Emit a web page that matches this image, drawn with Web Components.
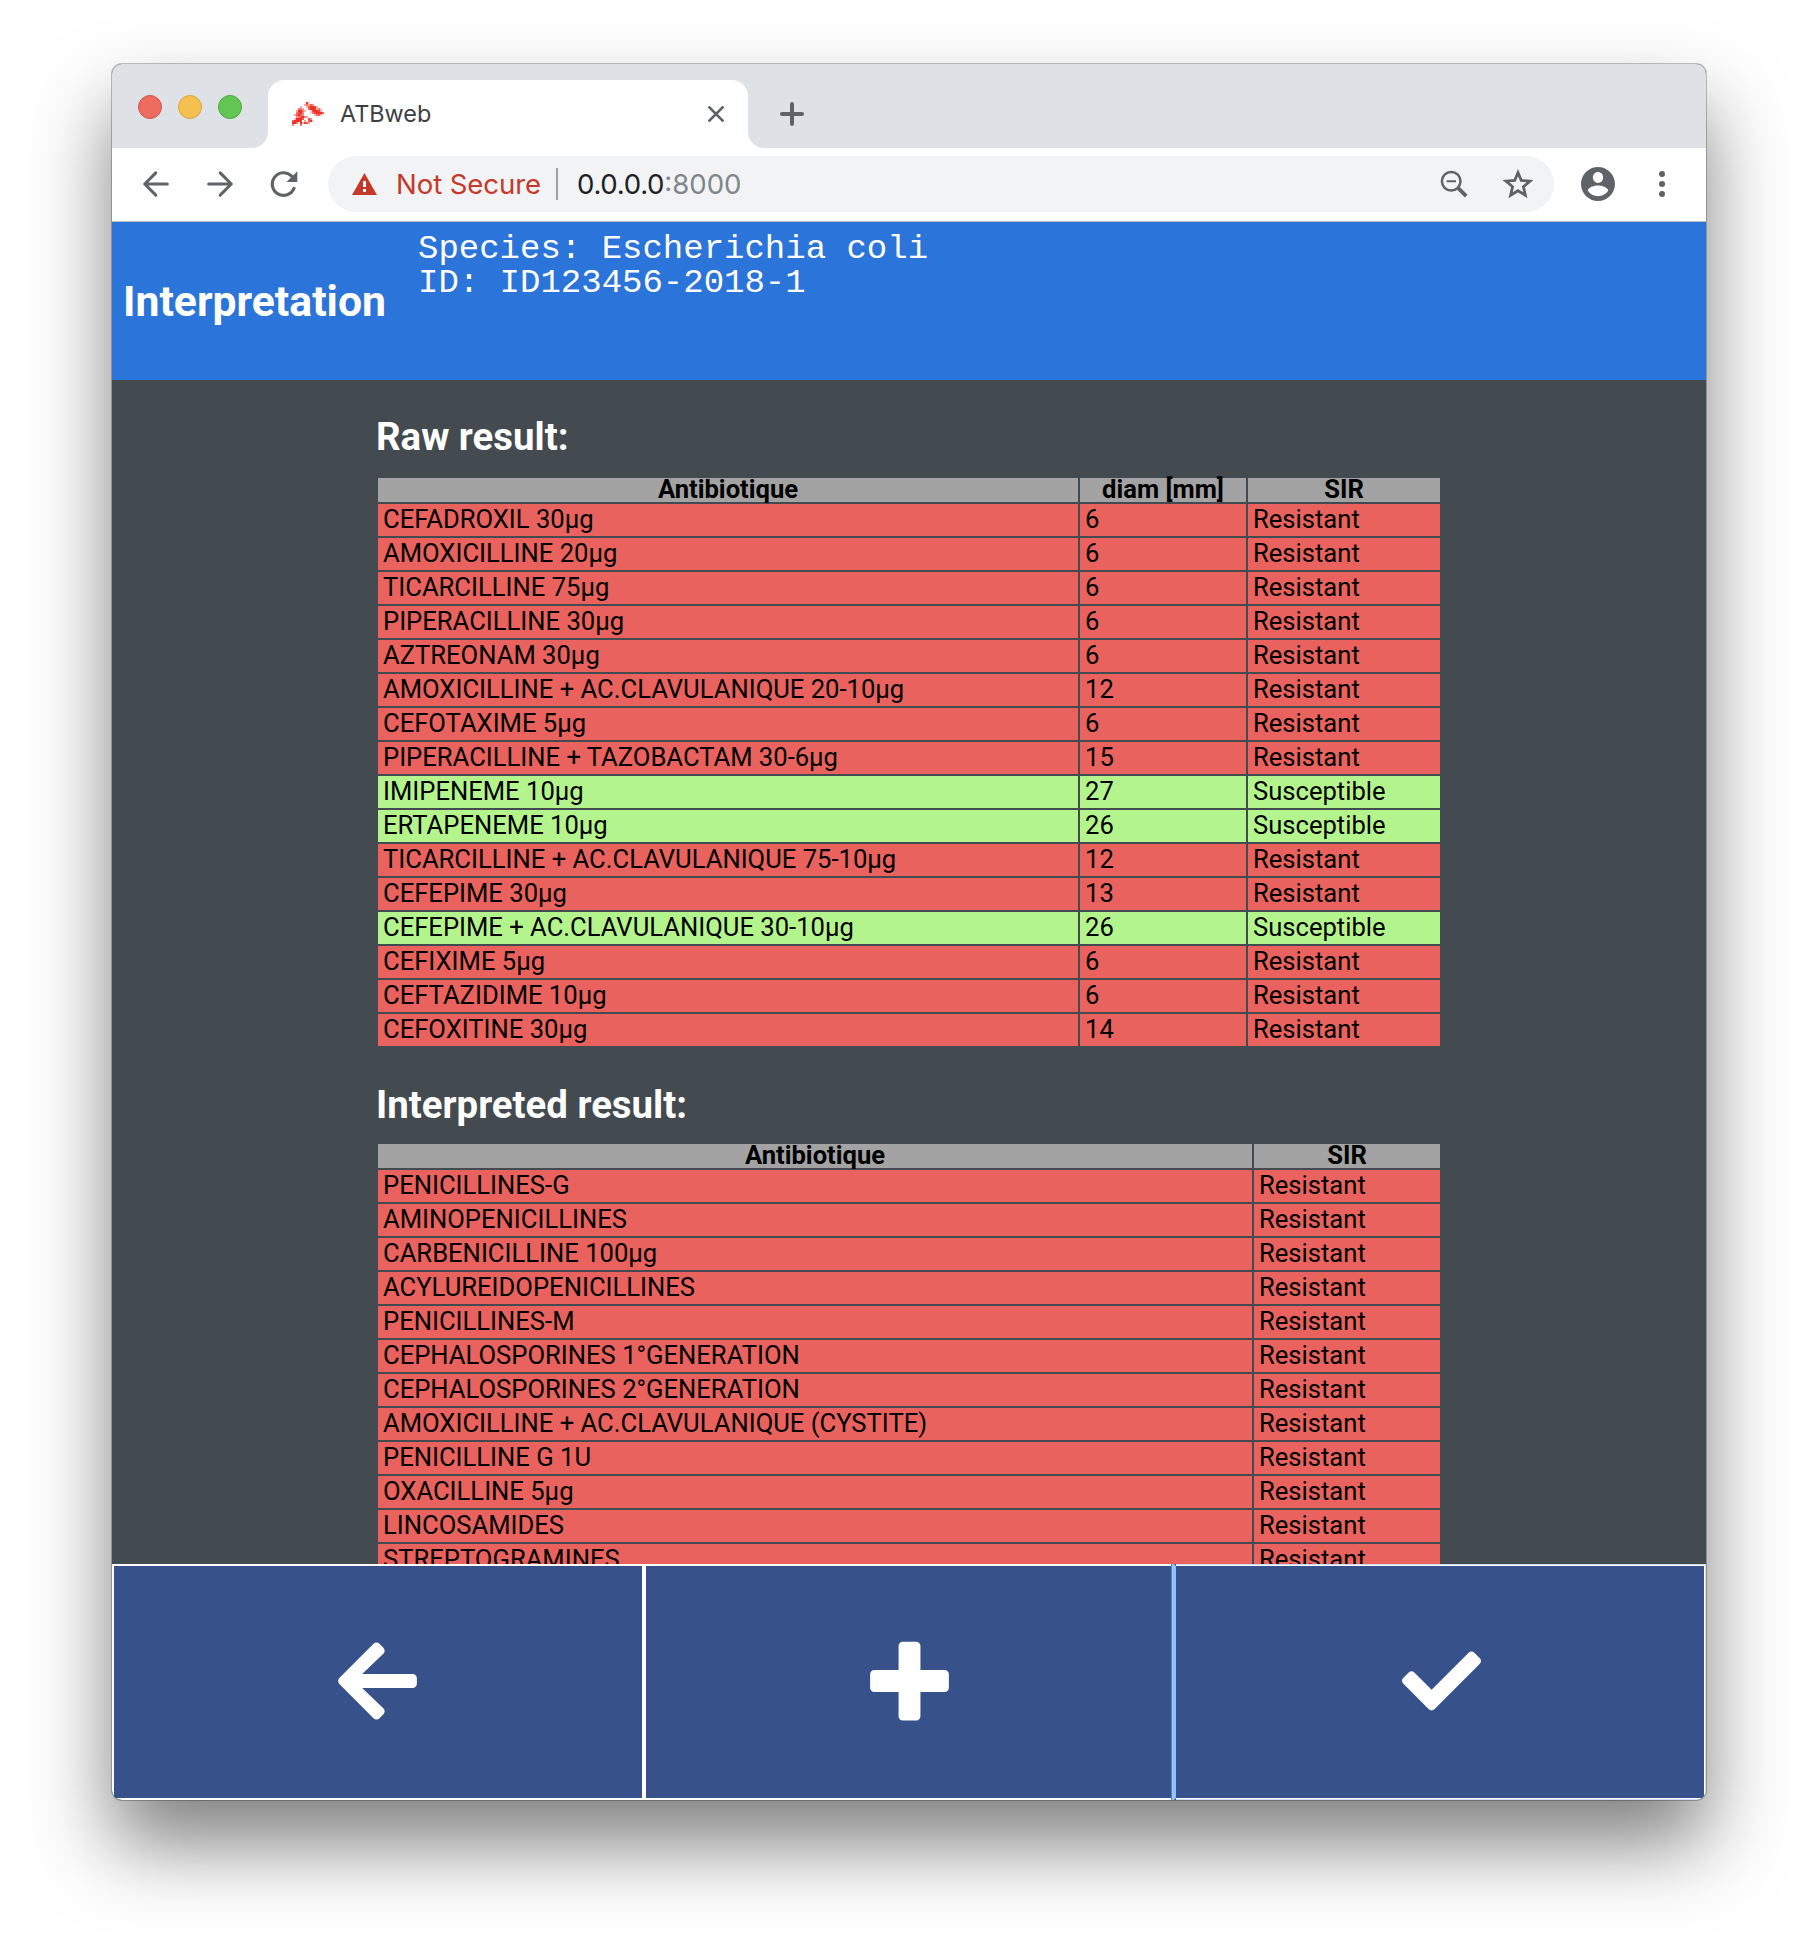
<!DOCTYPE html>
<html lang="en">
<head>
<meta charset="utf-8">
<title>ATBweb</title>
<style>
html,body{margin:0;height:100%;background:#fff}
body{width:1818px;height:1960px;overflow:hidden;font-family:Roboto,"Liberation Sans",sans-serif}
</style>
</head>
<body>
<browser-window>
  <tab-strip slot="chrome">ATBweb</tab-strip>
  <nav-bar slot="chrome" host="0.0.0.0" port=":8000">Not Secure</nav-bar>
  <page-header heading="Interpretation"><div>Species: Escherichia coli</div><div>ID: ID123456-2018-1</div></page-header>
  <result-view></result-view>
  <action-bar>
    <action-button icon="back"></action-button>
    <action-button icon="plus"></action-button>
    <action-button icon="check" active></action-button>
  </action-bar>
</browser-window>

<script>
class BaseElement extends HTMLElement {
  connectedCallback() {
    if (this.shadowRoot) return;
    this.attachShadow({ mode: 'open' }).innerHTML = this.render();
  }
}

customElements.define('browser-window', class extends BaseElement {
  render() {
    return `<style>
      :host{display:block;padding:64px 112px 160px}
      .win{display:flex;flex-direction:column;width:1594px;height:1736px;border-radius:10px;background:#434a50;
        box-shadow:0 0 0 1px rgba(0,0,0,.24),0 44px 80px rgba(0,0,0,.5)}
      .clip{display:flex;flex-direction:column;flex:1;min-height:0;border-radius:10px;overflow:hidden}
      .chrome{display:flex;flex-direction:column}
    </style>
    <div class="win"><div class="clip"><div class="chrome"><slot name="chrome"></slot></div><slot></slot></div></div>`;
  }
});

/* The site icon is a 16×12 bitmap; each digit is the opacity of one cell. */
const SITE_ICON = [
  '0000000920000000',
  '0000004647500000',
  '0000300379984000',
  '0006640079993620',
  '0049963002899840',
  '0068950002689997',
  '0479750000036731',
  '0056896400001000',
  '0399970085000000',
  '7999804079200000',
  '9960938740000000',
  '5000600000000000'];

customElements.define('tab-strip', class extends BaseElement {
  render() {
    const cells = SITE_ICON.map((row, y) => [...row].map((v, x) =>
      v === '0' ? '' : `<rect x="${x * 2}" y="${y * 2}" width="2" height="2" opacity="${v / 9}"/>`).join('')).join('');
    return `<style>
      :host{display:flex;height:84px;background:#dee1e6;box-sizing:border-box;align-items:flex-end}
      .lights{display:flex;gap:16px;padding:0 0 29px 26px;width:114px}
      .lights i{width:24px;height:24px;border-radius:50%;box-sizing:border-box;border:1px solid}
      .r{background:#ee6b60;border-color:#d2554b!important}
      .y{background:#f6c04f;border-color:#dba23b!important}
      .g{background:#62c655;border-color:#4ea73f!important}
      .curve{display:block;width:16px;height:16px;flex:none}
      .tab{display:flex;align-items:center;width:480px;height:68px;background:#fff;border-radius:16px 16px 0 0;box-sizing:border-box;padding:0 24px}
      .name{flex:1;font:23.4px/40px Inter,"Liberation Sans",sans-serif;color:#3c4043;padding:0 0 1px 16px}
      svg{display:block;flex:none}
      .plus{padding:0 0 22px 16px}
    </style>
    <div class="lights"><i class="r"></i><i class="y"></i><i class="g"></i></div>
    <svg class="curve" viewBox="0 0 16 16"><path fill="#fff" d="M16 0v16H0A16 16 0 0 0 16 0z"/></svg>
    <div class="tab">
      <svg width="32" height="24" viewBox="0 0 32 24" fill="#ee3124" shape-rendering="crispEdges">${cells}</svg>
      <span class="name"><slot></slot></span>
      <svg width="16" height="16" viewBox="0 0 16 16" stroke="#5f6368" stroke-width="2.7" stroke-linecap="round"><path d="M1.4 1.4l13.2 13.2M14.6 1.4L1.4 14.6"/></svg>
    </div>
    <svg class="curve" viewBox="0 0 16 16"><path fill="#fff" d="M0 0v16h16A16 16 0 0 1 0 0z"/></svg>
    <svg class="plus" width="24" height="24" viewBox="0 0 24 24" stroke="#5f6368" stroke-width="4" stroke-linecap="round"><path d="M12 2v20M2 12h20"/></svg>`;
  }
});

customElements.define('nav-bar', class extends BaseElement {
  render() {
    return `<style>
      :host{display:flex;height:74px;box-sizing:border-box;background:#fff;border-bottom:1px solid #bcbcbc;align-items:center;padding:0 0 1px 29px;color:#5f6368}
      svg{display:block;flex:none}
      .nav{display:flex;gap:36px;width:187px}
      .box{display:flex;align-items:center;width:1226px;height:56px;border-radius:28px;background:#f1f3f4;box-sizing:border-box;padding:0 21px 0 24px;
        font:27.6px/40px Inter,"Liberation Sans",sans-serif}
      .warn{color:#c5392b;margin-left:19px;letter-spacing:-.1px}
      .sep{width:2px;height:32px;background:#9aa0a6;margin:0 19px 0 15px}
      .host{color:#202124;letter-spacing:-.3px}
      .port{color:#80868b;flex:1}
      .icons{display:flex;align-items:center;gap:35px}
      .tail{display:flex;align-items:center;padding-left:27px;gap:44px}
    </style>
    <div class="nav">
      <svg width="30" height="28" viewBox="0 0 30 28" fill="none" stroke="currentColor" stroke-width="3" stroke-linecap="round" stroke-linejoin="round"><path d="M26.3 14H4.2M14.8 2.9L3.7 14l11.1 11.1"/></svg>
      <svg style="margin-left:-2px" width="30" height="28" viewBox="0 0 30 28" fill="none" stroke="currentColor" stroke-width="3" stroke-linecap="round" stroke-linejoin="round"><path d="M3.7 14h22.1M15.2 2.9L26.3 14 15.2 25.1"/></svg>
      <svg style="margin-left:-2px" width="30" height="28" viewBox="0 0 30 28" fill="none" stroke="currentColor" stroke-width="3.2" stroke-linecap="round"><path d="M25 18.4A11.3 11.3 0 1 1 22.6 6.1"/><path fill="currentColor" stroke="none" d="M28.3 1.3v10.8H17.5z"/></svg>
    </div>
    <div class="box">
      <svg width="25" height="22" viewBox="0 0 25 22"><path fill="#c5392b" d="M12.5 0L25 22H0z"/><path fill="#fff" d="M11 8h3v6h-3zM11 16h3v3h-3z"/></svg>
      <span class="warn"><slot></slot></span><span class="sep"></span>
      <span class="host">${this.getAttribute('host')}</span><span class="port">${this.getAttribute('port')}</span>
      <div class="icons">
        <svg width="28" height="28" viewBox="0 0 28 28" fill="none" stroke="currentColor"><circle cx="11.2" cy="11.2" r="9.3" stroke-width="2.5"/><path stroke-width="2" d="M6.6 11.2h9.4"/><path stroke-width="3.8" d="M18.2 18.2l8 8"/></svg>
        <svg width="30" height="30" viewBox="0 0 30 30" fill="none" stroke="currentColor" stroke-width="2.8"><path d="M15 3.6l3.3 7.9 8.6.7-6.5 5.6 2 8.4L15 21.7l-7.4 4.500 2-8.400-6.500-5.600 8.600-.7z"/></svg>
      </div>
    </div>
    <div class="tail">
      <svg width="34" height="34" viewBox="2 2 20 20" fill="currentColor"><path d="M12 2C6.48 2 2 6.48 2 12s4.480 10 10 10 10-4.480 10-10S17.520 2 12 2zm0 3c1.660 0 3 1.340 3 3.200s-1.340 3.200-3 3.200-3-1.440-3-3.200S10.340 5 12 5zm0 14.200c-2.500 0-4.710-1.280-6-3.220.03-1.990 4-3.080 6-3.080 1.990 0 5.970 1.090 6 3.080-1.290 1.940-3.500 3.220-6 3.220z"/></svg>
      <svg width="6" height="26" viewBox="0 0 6 26" fill="currentColor"><circle cx="3" cy="3" r="3"/><circle cx="3" cy="13" r="3"/><circle cx="3" cy="23" r="3"/></svg>
    </div>`;
  }
});

customElements.define('page-header', class extends BaseElement {
  render() {
    return `<style>
      :host{display:flex;flex:none;height:158px;background:#2b74d9;color:#fff;box-sizing:border-box;padding-left:11px}
      h1{margin:0;width:295px;align-self:center;font:bold 42.700px/50px Roboto,sans-serif;white-space:nowrap}
      .info{padding-top:11px;font:34px/33.500px "Liberation Mono",monospace;white-space:pre}
    </style>
    <h1>${this.getAttribute('heading')}</h1><div class="info"><slot></slot></div>`;
  }
});

customElements.define('result-table', class extends BaseElement {
  render() {
    const cols = this.head.map(h => `<div class="h">${h}</div>`).join('');
    const body = this.rows.map(r => r.map(c => `<div class="${r[r.length - 1][0]}">${c}</div>`).join('')).join('');
    return `<style>
      :host{display:grid;flex:none;grid-template-columns:var(--cols);gap:2px;font-size:25.6px;line-height:30px;color:#000;white-space:nowrap}
      div{height:32px;box-sizing:border-box;padding-left:5px}
      .h{height:24px;line-height:22px;padding:0;background:#a3a3a3;font-weight:bold;text-align:center}
      .R{background:#e9625e}
      .S{background:#b3f58c}
    </style>${cols}${body}`;
  }
});

const R = 'Resistant', S = 'Susceptible';
const RAW = [
  ['CEFADROXIL 30µg', '6', R], ['AMOXICILLINE 20µg', '6', R], ['TICARCILLINE 75µg', '6', R],
  ['PIPERACILLINE 30µg', '6', R], ['AZTREONAM 30µg', '6', R], ['AMOXICILLINE + AC.CLAVULANIQUE 20-10µg', '12', R],
  ['CEFOTAXIME 5µg', '6', R], ['PIPERACILLINE + TAZOBACTAM 30-6µg', '15', R], ['IMIPENEME 10µg', '27', S],
  ['ERTAPENEME 10µg', '26', S], ['TICARCILLINE + AC.CLAVULANIQUE 75-10µg', '12', R], ['CEFEPIME 30µg', '13', R],
  ['CEFEPIME + AC.CLAVULANIQUE 30-10µg', '26', S], ['CEFIXIME 5µg', '6', R], ['CEFTAZIDIME 10µg', '6', R],
  ['CEFOXITINE 30µg', '14', R]];
const INTERPRETED = ['PENICILLINES-G', 'AMINOPENICILLINES', 'CARBENICILLINE 100µg', 'ACYLUREIDOPENICILLINES',
  'PENICILLINES-M', 'CEPHALOSPORINES 1°GENERATION', 'CEPHALOSPORINES 2°GENERATION',
  'AMOXICILLINE + AC.CLAVULANIQUE (CYSTITE)', 'PENICILLINE G 1U', 'OXACILLINE 5µg', 'LINCOSAMIDES',
  'STREPTOGRAMINES'].map(n => [n, R]);

customElements.define('result-view', class extends BaseElement {
  connectedCallback() {
    super.connectedCallback();
    const add = (id, head, rows) => {
      const t = document.createElement('result-table');
      t.head = head; t.rows = rows;
      this.shadowRoot.getElementById(id).append(t);
    };
    add('raw', ['Antibiotique', 'diam [mm]', 'SIR'], RAW);
    add('interpreted', ['Antibiotique', 'SIR'], INTERPRETED);
  }
  render() {
    return `<style>
      :host{display:flex;flex-direction:column;flex:1;min-height:0;overflow:hidden;background:#434a50;padding:35px 266px 0;box-sizing:border-box}
      h2{margin:0 0 19px -2px;font:bold 38.4px/44px Roboto,sans-serif;color:#fff;white-space:nowrap}
      section{display:block;flex:none}
      #raw{--cols:700px 166px 192px}
      #interpreted{--cols:874px 186px;padding-top:36.5px}
      #interpreted h2{margin-bottom:17.5px}
    </style>
    <section id="raw"><h2>Raw result:</h2></section>
    <section id="interpreted"><h2>Interpreted result:</h2></section>`;
  }
});

customElements.define('action-bar', class extends BaseElement {
  render() {
    return `<style>:host{display:grid;flex:none;grid-template-columns:532px 530px 532px;height:236px;background:#37528a}</style><slot></slot>`;
  }
});

const ICONS = {
  back: ['0 0 448 512', '0 1px 3px 0', 'M257.500 445.100l-22.200 22.200c-9.400 9.400-24.600 9.400-33.900 0L7 273c-9.400-9.400-9.400-24.600 0-33.900L201.400 44.700c9.400-9.400 24.600-9.400 33.900 0l22.200 22.200c9.500 9.500 9.300 25-.4 34.300L136.600 216H424c13.300 0 24 10.700 24 24v32c0 13.300-10.700 24-24 24H136.600l120.500 114.800c9.800 9.300 10 24.800.4 34.300z'],
  plus: ['0 0 448 512', '0 0 3px 0', 'M448 294.200v-76.400c0-13.300-10.700-24-24-24H286.200V56c0-13.300-10.700-24-24-24h-76.400c-13.300 0-24 10.700-24 24v137.800H24c-13.300 0-24 10.700-24 24v76.400c0 13.300 10.700 24 24 24h137.800V456c0 13.300 10.700 24 24 24h76.400c13.300 0 24-10.700 24-24V318.200H424c13.300 0 24-10.700 24-24z'],
  check: ['0 0 512 512', '0 0 3px 1px', 'M173.898 439.404l-166.400-166.400c-9.997-9.997-9.997-26.206 0-36.204l36.203-36.204c9.997-9.998 26.207-9.998 36.204 0L192 312.690 432.095 72.596c9.997-9.997 26.207-9.997 36.204 0l36.203 36.204c9.997 9.997 9.997 26.206 0 36.204l-294.400 294.401c-9.998 9.997-26.207 9.997-36.204-.001z']
};
customElements.define('action-button', class extends BaseElement {
  render() {
    const icon = this.getAttribute('icon'), [box, , d] = ICONS[icon];
    const pad = { back: '0 2px 2px 0', plus: '0 0 2px 0', check: '0 0 2px 2px' }[icon];
    return `<style>
      :host{display:flex;align-items:center;justify-content:center;box-sizing:border-box;border:2px solid #fff;padding:${pad}}
      :host([active]){border-color:transparent;border-left-color:#8fc0fb;box-shadow:-2px 0 0 #97c4fb,-3px 0 0 #5c82bd;background:
        linear-gradient(#c9dcfa,#c9dcfa) top/100% 1px no-repeat border-box,
        linear-gradient(#c9dcfa,#c9dcfa) bottom/100% 1px no-repeat border-box,
        linear-gradient(#c9dcfa,#c9dcfa) right/1px 100% no-repeat border-box,
        linear-gradient(#37528a,#37528a) padding-box,
        linear-gradient(#fff,#fff) border-box}
      svg{display:block}
    </style>
    <svg width="79" height="90" viewBox="${box}" fill="#fff"><path d="${d}"/></svg>`;
  }
});
</script>
</body>
</html>
